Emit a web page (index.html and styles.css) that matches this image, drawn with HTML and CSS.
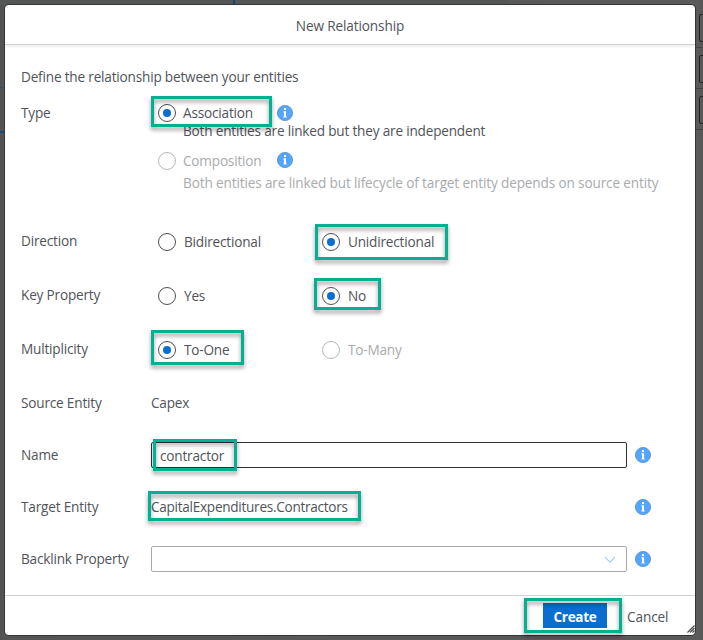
FILE: index.html
```html
<!DOCTYPE html>
<html lang="en">
<head>
<meta charset="utf-8">
<title>New Relationship</title>
<link rel="stylesheet" href="styles.css">
</head>
<body>
<svg width="0" height="0" class="defs"><defs>
<symbol id="info" viewBox="0 0 16 16"><circle cx="8" cy="8" r="7.6" fill="#55a5fb" stroke="#4c8fcd" stroke-width=".8"/><path d="M7 3.1h2v2H7zM6.4 6.3H9v5.1h.7v1.1H6.3v-1.1H7V7.4h-.6z" fill="#fff"/></symbol>
</defs></svg>
<div class="backdrop">
  <i class="tab"></i><i class="tab-edge"></i><i class="side side-a"></i><i class="side side-b"></i>
  <div class="peek"><div class="peek-row"></div><div class="peek-row"></div><div class="peek-row"></div></div>
</div>
<main class="dialog">
  <header class="head">New Relationship</header>
  <section class="body">
    <p class="intro">Define the relationship between your entities</p>
    <div class="row type">
      <span class="label">Type</span>
      <div class="choices">
        <div class="option"><i class="radio on"></i><span class="assoc">Association</span><svg class="info"><use href="#info"/></svg><b class="mark m-assoc"></b></div>
        <p class="desc"><span>Both entities are linked but they are independent</span></p>
        <div class="option second off"><i class="radio"></i><span class="comp">Composition</span><svg class="info"><use href="#info"/></svg></div>
        <p class="desc low off"><span>Both entities are linked but lifecycle of target entity depends on source entity</span></p>
      </div>
    </div>
    <div class="row"><span class="label">Direction</span>
      <div class="pair"><div class="option"><i class="radio"></i><span>Bidirectional</span></div><div class="option"><i class="radio on"></i><span>Unidirectional</span><b class="mark m-uni"></b></div></div></div>
    <div class="row"><span class="label">Key Property</span>
      <div class="pair"><div class="option"><i class="radio"></i><span>Yes</span></div><div class="option"><i class="radio on"></i><span>No</span><b class="mark m-no"></b></div></div></div>
    <div class="row"><span class="label">Multiplicity</span>
      <div class="pair"><div class="option"><i class="radio on"></i><span>To-One</span><b class="mark m-one"></b></div><div class="option off"><i class="radio"></i><span>To-Many</span></div></div></div>
    <div class="row field"><span class="label">Source Entity</span><div class="value"><span>Capex</span></div></div>
    <div class="row field"><span class="label">Name</span><div class="value box"><span>contractor</span><b class="mark m-name"></b></div><svg class="info"><use href="#info"/></svg></div>
    <div class="row field"><span class="label">Target Entity</span><div class="value"><span class="target">CapitalExpenditures.Contractors</span><b class="mark m-target"></b></div><svg class="info"><use href="#info"/></svg></div>
    <div class="row field"><span class="label">Backlink Property</span><div class="value box select"><svg class="chevron" viewBox="0 0 12 8"><path d="M1 1.2l5 5 5-5" fill="none" stroke="#a3cbf3" stroke-width="1.1"/></svg></div><svg class="info"><use href="#info"/></svg></div>
  </section>
  <footer class="foot">
    <div class="action"><span class="create">Create</span><b class="mark m-create"></b></div>
    <span class="cancel">Cancel</span>
    <svg class="grip" viewBox="0 0 8 8"><path d="M.5 7.5l7-7M3 7.5L7.5 3M5.5 7.5l2-2" stroke="#444" stroke-width="1.1"/></svg>
  </footer>
</main>
</body>
</html>
```
FILE: styles.css
```css
* { box-sizing: border-box; }
body { margin: 0; width: 703px; height: 640px; overflow: hidden; position: relative; background: #555; font: 13.6px/20px "Open Sans", "Noto Sans", sans-serif; letter-spacing: -.19px; color: #50545a; }
p { margin: 0; }
.defs { position: absolute; }
.backdrop { position: absolute; inset: 0; background: linear-gradient(90deg, #505252, #555 4px, #5a5a5a 698px, #565656); }
.tab { position: absolute; left: 0; top: 0; width: 508px; height: 5px; background: #535654; }
.tab-edge { position: absolute; left: 233px; top: 0; width: 2px; height: 5px; background: #12486f; }
.side { position: absolute; left: 0; width: 5px; height: 1px; background: #285577; }
.side-a { top: 87px; }
.side-b { top: 131px; height: 2px; background: #104d7b; }
.peek { position: absolute; right: 0; top: 7px; width: 8px; }
.peek-row { height: 41px; border-bottom: 1px solid #424242; padding: 7px 0 0 4px; }
.peek-row::before { content: ""; display: block; width: 12px; height: 26px; border: 1px solid #222; border-radius: 2px; }
.dialog { position: relative; display: flex; flex-direction: column; width: 690px; height: 630px; margin: 5px 0 0 5px; background: #fff; border-radius: 4px; box-shadow: 0 0 0 1px #343638; }
.head { height: 40px; flex: none; padding-top: 11px; text-align: center; letter-spacing: -.12px; border-bottom: 1px solid #d2d2d2; box-shadow: 0 2px 3px #0001; }
.body { padding: 14px 16px 0; flex: 1; }
.intro { height: 36px; padding-top: 8px; }
.row { display: flex; height: 54px; align-items: center; }
.label { width: 130px; flex: none; position: relative; top: -1px; }
.type { height: 120px; align-items: flex-start; }
.type .label { padding-top: 9px; }
.option { position: relative; display: flex; align-items: center; height: 36px; width: 164px; padding-left: 7px; white-space: nowrap; }
.radio { flex: none; width: 18px; height: 18px; border: 1px solid #4a4e54; border-radius: 50%; margin-right: 8px; background: #fff; display: grid; place-items: center; }
.radio.on::before { content: ""; width: 8px; height: 8px; border-radius: 50%; background: #0a6ed1; }
.off { color: #a8abae; }
.off .radio { border-color: #b4b6b8; }
.choices .radio { margin-right: 7px; }
.assoc, .comp { width: 94px; flex: none; }
.info { width: 16px; height: 16px; flex: none; }
.desc { position: relative; height: 20px; margin-top: -10px; padding-left: 32px; white-space: nowrap; }
.second { height: 40px; }
.second .info { margin-top: -2px; }
.low { margin-top: -8px; letter-spacing: -.135px; }
.pair { display: grid; grid-template-columns: 164px 164px; }
.field { height: 52px; }
.field .label { top: 0; }
.value { position: relative; width: 476px; height: 26px; display: flex; align-items: center; margin-right: 8px; }
.target { letter-spacing: -.28px; }
.box { border: 1px solid #2f3338; border-radius: 2px; padding: 2px 9px 0 8px; }
.select { border-color: #aaa; justify-content: flex-end; }
.chevron { width: 12px; height: 8px; margin: -1px 1px 0 0; }
.foot { height: 40px; flex: none; position: relative; border-top: 1px solid #d2d2d2; display: flex; justify-content: flex-end; align-items: flex-start; padding: 7px 28px 0 0; }
.action { position: relative; margin-right: 20px; }
.create { display: block; width: 64px; height: 25px; line-height: 27px; text-align: center; color: #fff; font-weight: 700; letter-spacing: -.3px; background: #0a6ed1; }
.cancel { width: 40px; line-height: 27px; white-space: nowrap; letter-spacing: -.1px; }
.grip { position: absolute; right: 0; bottom: 2px; width: 8px; height: 8px; }
.mark { position: absolute; z-index: 2; border: 3px solid #05b092; filter: drop-shadow(0 3px 2px #0006); }
.m-assoc { left: 0; top: 1px; width: 121px; height: 31px; }
.m-uni { left: 0; top: 0; width: 133px; height: 36px; }
.m-no { left: -1px; top: 0; width: 67px; height: 32px; }
.m-one { left: 0; top: -2px; width: 93px; height: 35px; }
.m-name { left: 1px; top: -4px; width: 84px; height: 32px; }
.m-target { left: -3px; top: -3px; width: 213px; height: 30px; }
.m-create { left: -19px; top: -5px; width: 98px; height: 35px; }
```
